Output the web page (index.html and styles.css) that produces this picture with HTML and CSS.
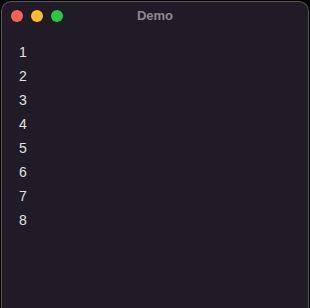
FILE: index.html
```html
<!DOCTYPE html>
<html lang="en">
<head>
  <meta charset="UTF-8" />
  <title>Demo</title>
  <link rel="stylesheet" href="styles.css">
</head>
<body>
  <div class="window">
    <div class="titlebar">
      <div class="lights">
        <span class="light red"></span>
        <span class="light yellow"></span>
        <span class="light green"></span>
      </div>
      <div class="title">Demo</div>
    </div>
    <ul class="list">
      <li>1</li>
      <li>2</li>
      <li>3</li>
      <li>4</li>
      <li>5</li>
      <li>6</li>
      <li>7</li>
      <li>8</li>
    </ul>
  </div>
</body>
</html>
```

FILE: styles.css
```css
html, body {
  margin: 0;
  height: 100%;
  background: #000;
}
body {
  font-family: "Helvetica Neue", "Liberation Sans", Arial, sans-serif;
  padding: 1px 1px 0;
  box-sizing: border-box;
}
.window {
  box-sizing: border-box;
  height: 100%;
  background: #201b27;
  border: 1px solid #57545b;
  border-bottom: none;
  border-radius: 10px 10px 0 0;
}
.titlebar {
  position: relative;
  height: 27px;
  display: flex;
  align-items: center;
  justify-content: center;
}
.lights {
  position: absolute;
  left: 9px;
  top: 8px;
  display: flex;
  gap: 8px;
}
.light {
  width: 12px;
  height: 12px;
  border-radius: 50%;
}
.red { background: #fe5f57; }
.yellow { background: #febc2e; }
.green { background: #28c840; }
.title {
  color: #8d8993;
  font-size: 13px;
  font-weight: bold;
}
.list {
  list-style: none;
  margin: 0;
  padding: 11px 0 0 17px;
}
.list li {
  color: #e3e0e6;
  font-size: 14px;
  line-height: 24px;
}
```
